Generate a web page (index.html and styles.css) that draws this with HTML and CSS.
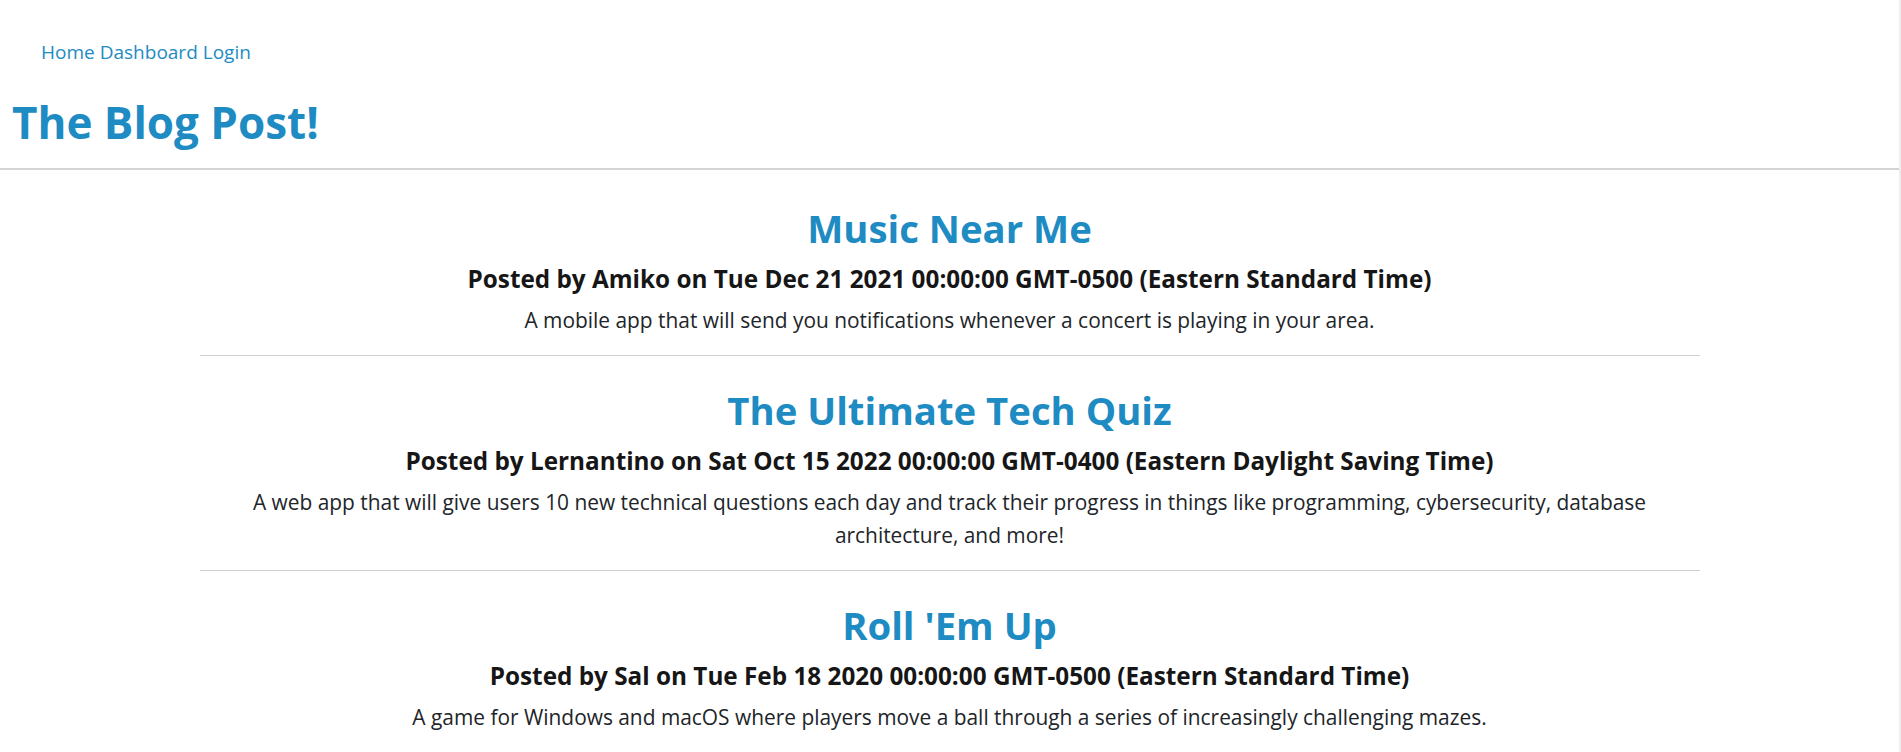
FILE: index.html
```html
<!DOCTYPE html>
<html lang="en">
<head>
<meta charset="utf-8">
<title>The Blog Post!</title>
<link rel="stylesheet" href="styles.css">
</head>
<body>
<div class="page">
  <header class="site-header">
    <nav class="nav">
      <a href="#">Home</a>
      <a href="#">Dashboard</a>
      <a href="#">Login</a>
    </nav>
    <h1 class="site-title">The Blog Post!</h1>
  </header>
  <main class="posts">
    <article class="post">
      <h2 class="post-title">Music Near Me</h2>
      <h3 class="post-meta">Posted by Amiko on Tue Dec 21 2021 00:00:00 GMT-0500 (Eastern Standard Time)</h3>
      <p class="post-body">A mobile app that will send you notifications whenever a concert is playing in your area.</p>
    </article>
    <hr class="divider">
    <article class="post">
      <h2 class="post-title">The Ultimate Tech Quiz</h2>
      <h3 class="post-meta">Posted by Lernantino on Sat Oct 15 2022 00:00:00 GMT-0400 (Eastern Daylight Saving Time)</h3>
      <p class="post-body">A web app that will give users 10 new technical questions each day and track their progress in things like programming, cybersecurity, database architecture, and more!</p>
    </article>
    <hr class="divider">
    <article class="post">
      <h2 class="post-title">Roll 'Em Up</h2>
      <h3 class="post-meta">Posted by Sal on Tue Feb 18 2020 00:00:00 GMT-0500 (Eastern Standard Time)</h3>
      <p class="post-body">A game for Windows and macOS where players move a ball through a series of increasingly challenging mazes.</p>
    </article>
    <hr class="divider">
  </main>
</div>
</body>
</html>
```

FILE: styles.css
```css
html, body {
  margin: 0;
  padding: 0;
  background: #ffffff;
}

body {
  font-family: "Open Sans", "Noto Sans", "Liberation Sans", sans-serif;
  color: #212529;
}

.page {
  min-height: 100vh;
  box-sizing: border-box;
  border-right: 2px solid #eeeeee;
}

.site-header {
  padding: 37px 0 18px 0;
  border-bottom: 2px solid #d4d4d4;
}

.nav {
  display: flex;
  gap: 5px;
  padding-left: 41px;
  font-size: 19px;
  line-height: 30px;
}

.nav a {
  color: #1e8bc3;
  text-decoration: none;
}

.site-title {
  margin: 27px 0 0 0;
  padding-left: 12px;
  font-size: 44px;
  line-height: 56px;
  font-weight: 700;
  color: #1e8bc3;
}

.posts {
  width: 1500px;
  margin: 0 auto;
  padding-top: 4px;
  text-align: center;
}

.post {
  padding-top: 27px;
  padding-bottom: 18px;
}

.post-title {
  margin: 0;
  font-size: 38.3px;
  line-height: 54px;
  font-weight: 700;
  color: #1e8bc3;
}

.post-meta {
  margin: 7px 0 0 0;
  font-size: 24.3px;
  line-height: 34px;
  font-weight: 700;
  color: #161616;
}

.post-body {
  margin: 8px 0 0 0;
  font-size: 20.9px;
  line-height: 33px;
  color: #212529;
}

.divider {
  margin: 0;
  border: 0;
  border-top: 1px solid #d0d0d0;
  height: 0;
}
```
